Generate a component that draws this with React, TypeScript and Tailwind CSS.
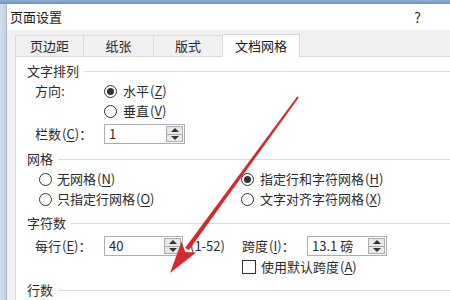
import React from 'react';

const font = "font-['Noto_Sans_CJK_SC','Noto_Sans',sans-serif]";

function Key({ k }: { k: string }): React.ReactElement {
  return (
    <>
      <span className="ml-px">(</span>
      <span className="underline underline-offset-2">{k}</span>)
    </>
  );
}

function Radio({ checked }: { checked?: boolean }): React.ReactElement {
  return (
    <span className="flex h-[13px] w-[13px] shrink-0 items-center justify-center rounded-full border border-[#333] bg-white">
      {checked ? <span className="h-[7px] w-[7px] rounded-full bg-[#333]" /> : null}
    </span>
  );
}

function GroupHeader({ label, className = '' }: { label: string; className?: string }): React.ReactElement {
  return (
    <div className={`flex h-[20px] items-center ${className}`}>
      <span className="text-[13px] text-[#2a2a2a]">{label}</span>
      <span className="ml-[5px] h-px flex-1 bg-[#dcdcdc]" />
    </div>
  );
}

function Spinner({ value, width }: { value: string; width: string }): React.ReactElement {
  return (
    <div className={`flex h-[20px] items-stretch border border-[#abadb3] bg-white ${width}`}>
      <span className="flex flex-1 items-center pl-[4px] text-[13px] text-[#2a2a2a]">{value}</span>
      <div className="my-px mr-px flex w-[17px] flex-col border border-[#acacac] bg-[#e8e8e8]">
        <span className="flex flex-1 items-center justify-center border-b border-[#acacac]">
          <span className="h-0 w-0 border-x-[4px] border-b-[4px] border-x-transparent border-b-[#333]" />
        </span>
        <span className="flex flex-1 items-center justify-center">
          <span className="h-0 w-0 border-x-[4px] border-t-[4px] border-x-transparent border-t-[#333]" />
        </span>
      </div>
    </div>
  );
}

const tabs = [
  { label: '页边距', w: 'w-[68px]' },
  { label: '纸张', w: 'w-[70px]' },
  { label: '版式', w: 'w-[69px]' },
];

export default function App(): React.ReactElement {
  return (
    <div className={`relative h-[300px] w-[450px] overflow-hidden bg-[#f0f0f0] ${font}`}>
      <div className="h-[4px] bg-gradient-to-b from-[#8eb0da] to-[#6a93c6]" />
      <div className="flex h-[296px]">
        <div className="w-[7px] shrink-0 border-r border-[#a9b9cc] bg-gradient-to-r from-[#d2deec] to-[#c3d0e0]" />
        <div className="flex flex-1 flex-col">
          <div className="flex h-[28px] items-center justify-between bg-white pl-[3px] pr-[29px]">
            <span className="text-[13px] text-[#1a1a1a]">页面设置</span>
            <span className="text-[14px] text-[#333]">?</span>
          </div>

          <div className="flex h-[28px] items-end pl-[8px]">
            {tabs.map((t) => (
              <div
                key={t.label}
                className={`flex h-[21px] items-center justify-center border border-b-0 border-r-0 border-[#d9d9d9] bg-[#f0f0f0] text-[13px] text-[#2a2a2a] ${t.w}`}
              >
                {t.label}
              </div>
            ))}
            <div className="relative z-10 -mb-px flex h-[23px] w-[78px] items-center justify-center border border-b-0 border-[#d9d9d9] bg-white text-[13px] text-[#1a1a1a]">
              文档网格
            </div>
          </div>

          <div className="ml-[8px] flex-1 border-l border-t border-[#d9d9d9] bg-white pl-[11px] pt-[4px] text-[13px] text-[#2a2a2a]">
            <GroupHeader label="文字排列" />
            <div className="flex h-[20px] items-center pl-[8px]">
              <span className="w-[69px]">方向:</span>
              <Radio checked />
              <span className="ml-[6px]">
                水平<Key k="Z" />
              </span>
            </div>
            <div className="flex h-[20px] items-center pl-[77px]">
              <Radio />
              <span className="ml-[6px]">
                垂直<Key k="V" />
              </span>
            </div>
            <div className="mt-[3px] flex h-[20px] items-center pl-[8px]">
              <span className="w-[69px]">
                栏数<Key k="C" />：
              </span>
              <Spinner value="1" width="w-[81px]" />
            </div>

            <GroupHeader label="网格" className="mt-[5px]" />
            <div className="grid grid-cols-[202px_1fr] pl-[12px]">
              <div className="flex h-[20px] items-center">
                <Radio />
                <span className="ml-[5px]">
                  无网格<Key k="N" />
                </span>
              </div>
              <div className="flex h-[20px] items-center">
                <Radio checked />
                <span className="ml-[6px]">
                  指定行和字符网格<Key k="H" />
                </span>
              </div>
              <div className="flex h-[20px] items-center">
                <Radio />
                <span className="ml-[5px]">
                  只指定行网格<Key k="O" />
                </span>
              </div>
              <div className="flex h-[20px] items-center">
                <Radio />
                <span className="ml-[6px]">
                  文字对齐字符网格<Key k="X" />
                </span>
              </div>
            </div>

            <GroupHeader label="字符数" className="mt-[4px]" />
            <div className="mt-[3px] flex h-[20px] items-center pl-[8px]">
              <div className="flex w-[207px] items-center">
                <span className="w-[69px]">
                  每行<Key k="E" />：
                </span>
                <Spinner value="40" width="w-[79px]" />
                <span className="ml-[7px]">(1-52)</span>
              </div>
              <span className="w-[65px]">
                跨度<Key k="I" />：
              </span>
              <Spinner value="13.1 磅" width="w-[80px]" />
            </div>
            <div className="flex h-[22px] items-center pl-[215px]">
              <span className="h-[14px] w-[14px] border border-[#333] bg-white" />
              <span className="ml-[5px]">
                使用默认跨度<Key k="A" />
              </span>
            </div>

            <GroupHeader label="行数" className="mt-[2px]" />
          </div>
        </div>
      </div>

      <svg className="pointer-events-none absolute inset-0" width="450" height="300" viewBox="0 0 450 300">
        <polygon points="298.8,97.6 297.2,96.4 185.2,247.7 188.8,250.3" fill="#d42a2e" />
        <polygon points="170,273 196.1,252.4 185.3,252 181.5,241.8" fill="#d42a2e" />
      </svg>
    </div>
  );
}
